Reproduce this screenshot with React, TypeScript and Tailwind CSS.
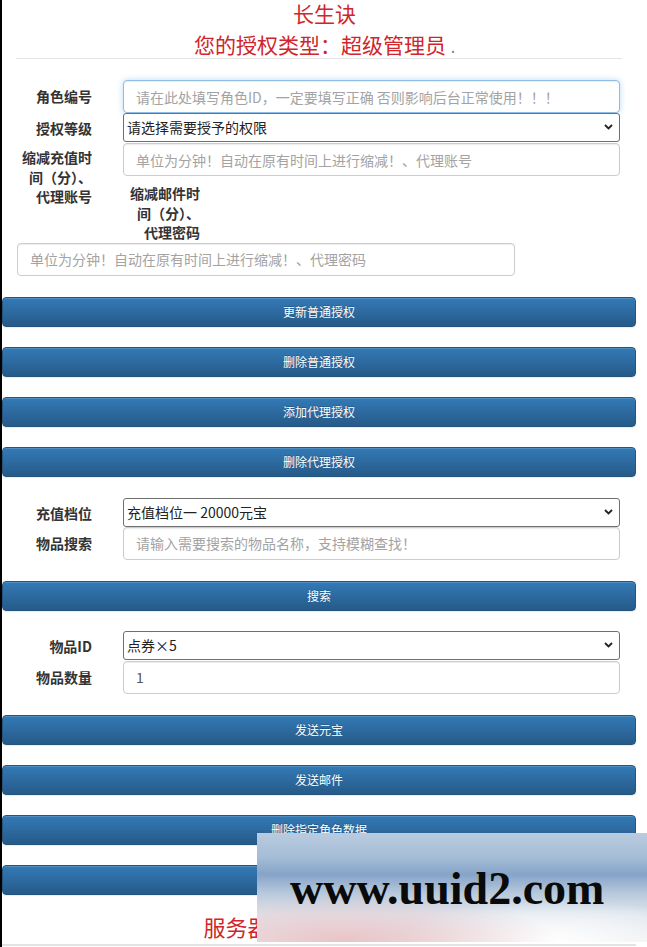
import React from 'react';

const font = 'font-["Noto_Sans_CJK_SC","Noto_Sans",sans-serif]';

const Label = ({ children, className = '' }: { children: React.ReactNode; className?: string }) => (
    <div className={`w-[105px] shrink-0 pl-[15px] pr-[15px] text-right text-[14px] font-bold text-[#333] ${className}`}>{children}</div>
);

const TextInput = ({ placeholder, value, focused, wide }: any) => (
    <input
        autoFocus={focused}
        defaultValue={value}
        placeholder={placeholder}
        className={`h-[33px] ${wide ? 'w-[498px]' : 'w-[497px]'} rounded-[4px] border bg-white px-[12px] text-[14px] text-[#555] outline-none placeholder:text-[#a3a3a3] ${
            focused
                ? 'border-[#8fbde6] shadow-[inset_0_1px_1px_rgba(0,0,0,0.075),0_0_6px_rgba(102,175,233,0.45)]'
                : 'border-[#ccc] shadow-[inset_0_1px_1px_rgba(0,0,0,0.075)]'
        }`}
    />
);

const Select = ({ options }: { options: string[] }) => (
    <div className="relative h-[29px] w-[497px]">
        <select className="h-full w-full appearance-none rounded-[3px] border border-[#6f6f6f] bg-white pl-[3px] text-[14px] text-[#222] outline-none">
            {options.map((o) => (
                <option key={o}>{o}</option>
            ))}
        </select>
        <svg className="pointer-events-none absolute right-[7px] top-[11px]" width="9" height="6" viewBox="0 0 9 6">
            <path d="M1 1 L4.5 4.5 L8 1" fill="none" stroke="#222" strokeWidth="1.8" />
        </svg>
    </div>
);

const Btn = ({ children, className = '' }: { children?: React.ReactNode; className?: string }) => (
    <button className={`block h-[30px] w-[634px] rounded-[4px] border border-[#245580] bg-[linear-gradient(to_bottom,#337ab7_0%,#265a88_100%)] text-[12px] text-white shadow-[inset_0_1px_0_rgba(255,255,255,0.15),0_1px_1px_rgba(0,0,0,0.075)] [text-shadow:0_-1px_0_rgba(0,0,0,0.2)] ${className}`}>
        {children}
    </button>
);

export default function App() {
    return (
        <div className={`relative min-h-[947px] w-[647px] overflow-hidden border-l-2 border-black bg-white ${font}`}>
            {/* header */}
            <div className="text-center text-[21px] text-[#d0252a]">
                <div className="h-[26px] leading-[26px]">长生诀</div>
                <div className="mt-[5px] h-[26px] leading-[26px]">
                    您的授权类型：超级管理员 <span className="text-[16px] leading-none text-[#6b8c8c]">.</span>
                </div>
            </div>
            <div className="ml-[14px] mr-[25px] mt-[1px] border-t border-[#e5e5e5]" />

            {/* authorization form */}
            <div className="mt-[21px] flex items-center">
                <Label>角色编号</Label>
                <div className="ml-[16px]">
                    <TextInput focused placeholder="请在此处填写角色ID，一定要填写正确 否则影响后台正常使用！！！" />
                </div>
            </div>
            <div className="flex items-center">
                <Label className="pt-[2px]">授权等级</Label>
                <div className="ml-[16px]">
                    <Select options={['请选择需要授予的权限', '普通授权', '代理授权']} />
                </div>
            </div>
            <div className="mt-[1px] flex items-start">
                <Label className="pt-[5px] leading-[19.5px]">缩减充值时间（分）、代理账号</Label>
                <div className="ml-[16px]">
                    <TextInput placeholder="单位为分钟！自动在原有时间上进行缩减！、代理账号" />
                    <div className="ml-[5px] w-[72px] pt-[8px] text-right text-[14px] font-bold leading-[19.5px] text-[#333]">
                        缩减邮件时间（分）、代理密码
                    </div>
                </div>
            </div>
            <div className="ml-[15px]">
                <TextInput wide placeholder="单位为分钟！自动在原有时间上进行缩减！、代理密码" />
            </div>

            <div className="mt-[21px] flex flex-col gap-[20px]">
                <Btn>更新普通授权</Btn>
                <Btn>删除普通授权</Btn>
                <Btn>添加代理授权</Btn>
                <Btn>删除代理授权</Btn>
            </div>

            {/* recharge */}
            <div className="mt-[21px] flex items-center">
                <Label className="pt-[2px]">充值档位</Label>
                <div className="ml-[16px]">
                    <Select options={['充值档位一 20000元宝', '充值档位二 50000元宝', '充值档位三 100000元宝']} />
                </div>
            </div>
            <div className="flex items-center">
                <Label>物品搜索</Label>
                <div className="ml-[16px]">
                    <TextInput placeholder="请输入需要搜索的物品名称，支持模糊查找！" />
                </div>
            </div>
            <Btn className="mt-[21px]">搜索</Btn>

            {/* items */}
            <div className="mt-[20px] flex items-center">
                <Label className="pt-[2px]">物品ID</Label>
                <div className="ml-[16px]">
                    <Select options={['点券×5', '点券×10', '点券×50']} />
                </div>
            </div>
            <div className="mt-[1px] flex items-center">
                <Label>物品数量</Label>
                <div className="ml-[16px]">
                    <TextInput value="1" />
                </div>
            </div>

            <div className="mt-[21px] flex flex-col gap-[20px]">
                <Btn>发送元宝</Btn>
                <Btn>发送邮件</Btn>
                <Btn>删除指定角色数据</Btn>
                <Btn>解封指定角色</Btn>
            </div>

            <div className="mt-[16px] text-center text-[22px] leading-[30px] text-[#d0252a]">服务器状态：正常运行中</div>
            <div className="mr-[11px] mt-[3px] border-t-2 border-[#e3e3e3]" />

            {/* watermark overlay */}
            <div className="absolute left-[255px] top-[833px] h-[109px] w-[392px] bg-[radial-gradient(ellipse_55%_45%_at_22%_100%,#e9c3c6_0%,rgba(233,195,198,0)_100%),radial-gradient(ellipse_40%_40%_at_75%_100%,#ffffff_0%,rgba(255,255,255,0)_100%),linear-gradient(to_bottom,#b9cbdf_0%,#a5bdd7_22%,#86a4c8_38%,#b7c8db_55%,#dfe6ee_75%,#eeeef0_100%)]">
                <div className="absolute left-[33px] top-[33px] font-['Liberation_Serif',serif] text-[46px] font-bold leading-[46px] text-[#0a0a0a]">
                    www.uuid2.com
                </div>
            </div>
        </div>
    );
}
